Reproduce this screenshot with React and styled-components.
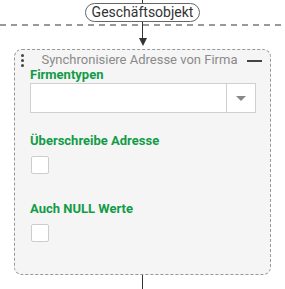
import React from 'react'
import styled, {createGlobalStyle} from 'styled-components'

const Global = createGlobalStyle`
  body {
    margin: 0;
    background: #fff;
    font-family: Roboto, "Liberation Sans", sans-serif;
  }
`

const Page = styled.div`
  display: flex;
  flex-direction: column;
  align-items: center;
  width: 285px;
  height: 289px;
  overflow: hidden;
`

const Stem = styled.div`
  width: 1px;
  height: ${p => p.h}px;
  background: #333;
  flex-shrink: 0;
`

const Pill = styled.div`
  height: 17px;
  padding: 0 6px;
  border: 1px solid #666;
  border-radius: 10px;
  font-size: 14px;
  line-height: 17px;
  color: #333;
  background: #fff;
`

const Zone = styled.div`
  position: relative;
  width: 100%;
  display: flex;
  flex-direction: column;
  align-items: center;
  &::before {
    content: '';
    position: absolute;
    left: 0;
    right: 0;
    top: 2px;
    height: 2px;
    background: repeating-linear-gradient(90deg, #999 0 6px, transparent 6px 11px);
  }
  & > * {
    position: relative;
  }
`

const Arrow = styled.div`
  width: 0;
  height: 0;
  border-left: 4.5px solid transparent;
  border-right: 4.5px solid transparent;
  border-top: 8px solid #333;
  margin-bottom: 3px;
`

const Card = styled.div`
  box-sizing: border-box;
  width: 257px;
  height: 227px;
  border: 1px dashed #999;
  border-radius: 8px;
  background: #f5f5f5;
  padding: 1px 15px 0 15px;
  display: flex;
  flex-direction: column;
`

const Header = styled.div`
  position: relative;
  height: 15px;
  display: flex;
  align-items: center;
  justify-content: center;
  font-size: 13px;
  color: #8a8a8a;
  padding-right: 6px;
  line-height: 15px;
  margin-top: 1px;
`

const Handle = styled.div`
  position: absolute;
  left: -9px;
  top: 2px;
  display: flex;
  flex-direction: column;
  gap: 2px;
  span {
    width: 3px;
    height: 3px;
    border-radius: 50%;
    background: #444;
  }
`

const Minus = styled.div`
  position: absolute;
  right: -7px;
  top: 8px;
  width: 15px;
  height: 2px;
  background: #444;
`

const Label = styled.div`
  font-size: 13px;
  font-weight: 700;
  color: #129c48;
  line-height: 16px;
  margin-top: ${p => p.top || 0}px;
`

const Select = styled.div`
  box-sizing: border-box;
  height: 30px;
  width: 226px;
  border: 1px solid #d0d0d0;
  background: #fff;
  display: flex;
  justify-content: flex-end;
`

const Caret = styled.div`
  width: 28px;
  border-left: 1px solid #d0d0d0;
  display: flex;
  align-items: center;
  justify-content: center;
  &::after {
    content: '';
    border-left: 5px solid transparent;
    border-right: 5px solid transparent;
    border-top: 5px solid #888;
  }
`

const Check = styled.div`
  box-sizing: border-box;
  width: 18px;
  height: 18px;
  margin-top: 7px;
  margin-left: 1px;
  border: 1px solid #ccc;
  border-radius: 2px;
  background: #fff;
`

export default function App() {
  return (
    <Page>
      <Global />
      <Stem h={3} />
      <Pill>Geschäftsobjekt</Pill>
      <Zone>
        <Stem h={16} />
        <Arrow />
      </Zone>
      <Card>
        <Header>
          <Handle><span /><span /><span /></Handle>
          Synchronisiere Adresse von Firma
          <Minus />
        </Header>
        <Label>Firmentypen</Label>
        <Select><Caret /></Select>
        <Label top={20}>Überschreibe Adresse</Label>
        <Check />
        <Label top={27}>Auch NULL Werte</Label>
        <Check />
      </Card>
      <Stem h={14} />
    </Page>
  )
}
